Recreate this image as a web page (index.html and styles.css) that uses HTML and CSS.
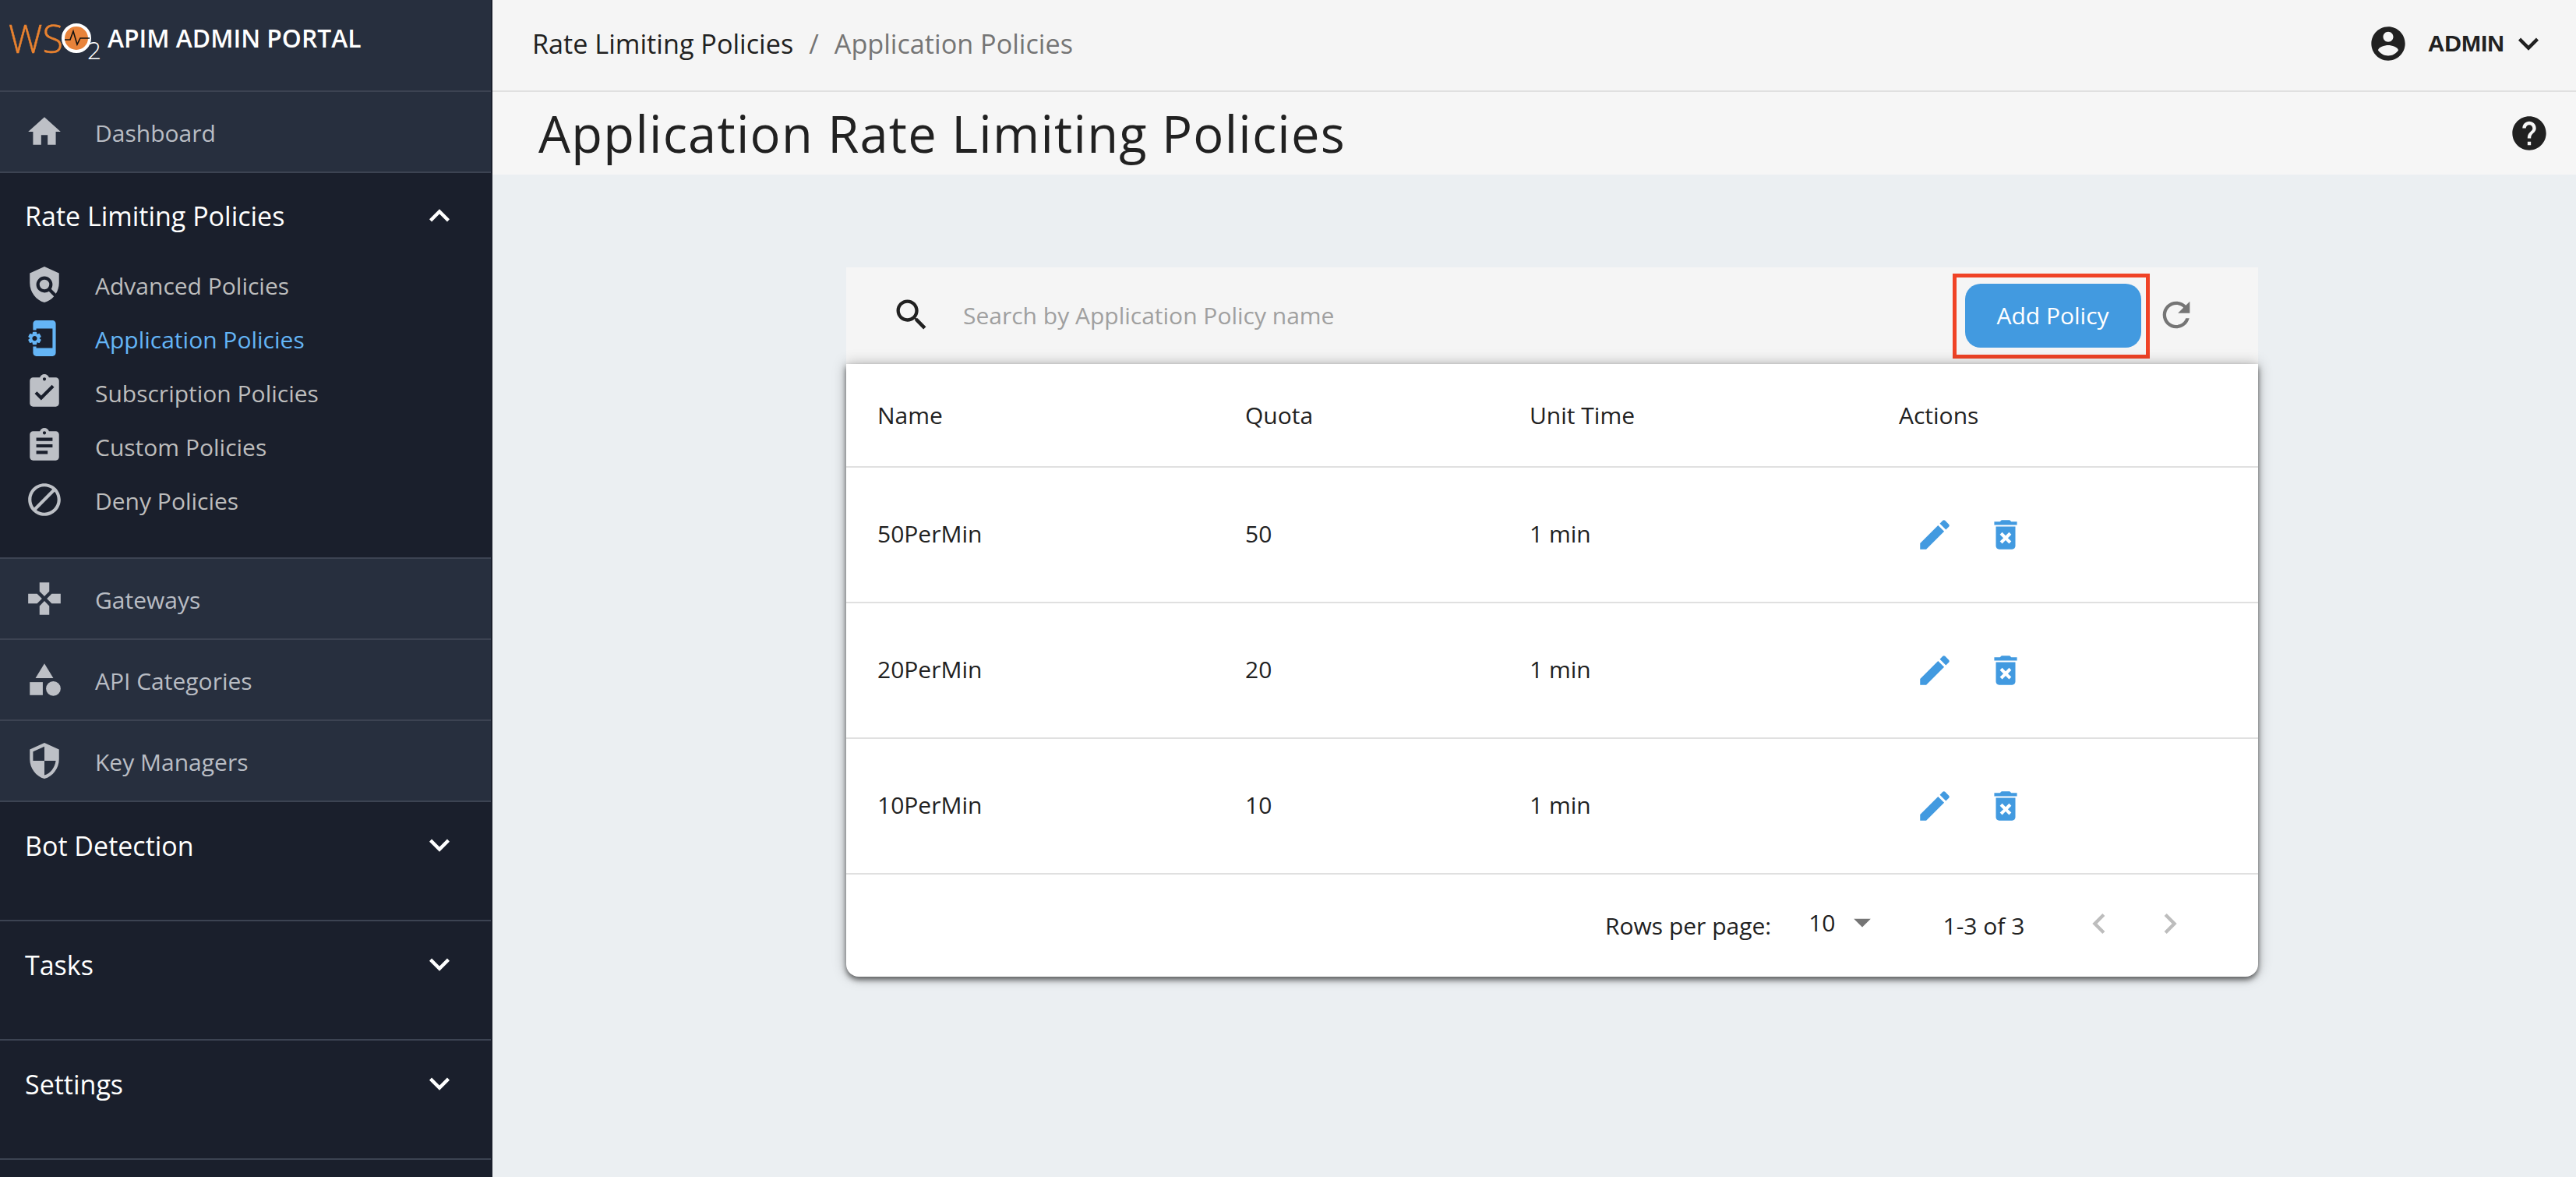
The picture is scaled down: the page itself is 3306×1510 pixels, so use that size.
FILE: index.html
```html
<!DOCTYPE html>
<html lang="en">

<head>
    <meta charset="UTF-8">
    <meta name="viewport" content="width=device-width, initial-scale=1.0">
    <title>Application Rate Limiting Policies</title>
    <link rel="stylesheet" href="styles.css">
</head>
<body>
    <div class="app">
        <aside class="sidebar">
            <div class="brand">
                <svg class="logo" width="132" height="96" viewBox="0 0 132 96">
                    <text class="logo-ws" x="11" y="68" textLength="70" lengthAdjust="spacingAndGlyphs">WS</text>
                    <circle cx="98" cy="49" r="17" fill="#e8833a" stroke="#fff" stroke-width="4"/>
                    <path d="M83 51h7l4-11 5 17 4-8h12" fill="none" stroke="#111" stroke-width="1.6"/>
                    <text class="logo-two" x="112" y="76" textLength="18" lengthAdjust="spacingAndGlyphs">2</text>
                </svg>
                <span class="brand-name">APIM ADMIN PORTAL</span>
            </div>

            <a class="nav-row">
                <svg class="nav-icon" viewBox="0 0 24 24"><path d="M10 20v-6h4v6h5v-8h3L12 3 2 12h3v8h5z"/></svg>
                <span>Dashboard</span>
            </a>

            <div class="nav-group open">
                <div class="group-title">
                    <span>Rate Limiting Policies</span>
                    <svg class="chevron" viewBox="0 0 24 24"><path d="M12 8l-6 6 1.41 1.41L12 10.83l4.59 4.58L18 14z"/></svg>
                </div>
                <a class="sub-row">
                    <svg class="nav-icon" viewBox="0 0 24 24"><path d="M21 5l-9-4-9 4v6c0 5.55 3.84 10.74 9 12 2.3-.56 4.33-1.9 5.88-3.71l-3.12-3.12c-1.94 1.29-4.58 1.07-6.29-.64-1.95-1.95-1.95-5.12 0-7.07 1.95-1.95 5.12-1.95 7.07 0 1.71 1.71 1.92 4.35.64 6.29l2.9 2.9C20.29 15.69 21 13.38 21 11V5z"/><circle cx="12" cy="12" r="3"/></svg>
                    <span>Advanced Policies</span>
                </a>
                <a class="sub-row active">
                    <svg class="nav-icon flip" viewBox="0 0 24 24"><path d="M21.81 12.74l-.82-.63v-.22l.8-.63c.16-.12.2-.34.1-.51l-.85-1.48c-.07-.13-.21-.2-.35-.2-.05 0-.1.01-.15.03l-.95.38c-.08-.05-.11-.07-.19-.11l-.15-1.01c-.03-.21-.2-.36-.4-.36h-1.71c-.2 0-.37.15-.4.34l-.14 1.01c-.03.02-.07.03-.1.05l-.09.06-.95-.38c-.05-.02-.1-.03-.15-.03-.14 0-.27.07-.35.2l-.85 1.48c-.1.17-.06.39.1.51l.8.63v.23l-.8.63c-.16.12-.2.34-.1.51l.85 1.48c.07.13.21.2.35.2.05 0 .1-.01.15-.03l.95-.37c.08.05.12.07.2.11l.15 1.01c.03.2.2.34.4.34h1.71c.2 0 .37-.15.4-.34l.15-1.01c.03-.02.07-.03.1-.05l.09-.06.95.38c.05.02.1.03.15.03.14 0 .27-.07.35-.2l.85-1.48c.1-.17.06-.39-.1-.51zM18 13.5c-.83 0-1.5-.67-1.5-1.5s.67-1.5 1.5-1.5 1.5.67 1.5 1.5-.67 1.5-1.5 1.5zM17 18H7V6h10v1h2V3c0-1.1-.9-2-2-2H7c-1.1 0-2 .9-2 2v18c0 1.1.9 2 2 2h10c1.1 0 2-.9 2-2v-4h-2v1z"/></svg>
                    <span>Application Policies</span>
                </a>
                <a class="sub-row">
                    <svg class="nav-icon" viewBox="0 0 24 24"><path d="M19 3h-4.18C14.4 1.84 13.3 1 12 1c-1.3 0-2.4.84-2.82 2H5c-1.1 0-2 .9-2 2v14c0 1.1.9 2 2 2h14c1.1 0 2-.9 2-2V5c0-1.1-.9-2-2-2zm-7 0c.55 0 1 .45 1 1s-.45 1-1 1-1-.45-1-1 .45-1 1-1zm-2 14l-4-4 1.41-1.41L10 14.17l6.59-6.59L18 9l-8 8z"/></svg>
                    <span>Subscription Policies</span>
                </a>
                <a class="sub-row">
                    <svg class="nav-icon" viewBox="0 0 24 24"><path d="M19 3h-4.18C14.4 1.84 13.3 1 12 1c-1.3 0-2.4.84-2.82 2H5c-1.1 0-2 .9-2 2v14c0 1.1.9 2 2 2h14c1.1 0 2-.9 2-2V5c0-1.1-.9-2-2-2zm-7 0c.55 0 1 .45 1 1s-.45 1-1 1-1-.45-1-1 .45-1 1-1zm2 14H7v-2h7v2zm3-4H7v-2h10v2zm0-4H7V7h10v2z"/></svg>
                    <span>Custom Policies</span>
                </a>
                <a class="sub-row">
                    <svg class="nav-icon" viewBox="0 0 24 24"><path d="M12 2C6.48 2 2 6.48 2 12s4.48 10 10 10 10-4.48 10-10S17.52 2 12 2zM4 12c0-4.42 3.58-8 8-8 1.85 0 3.55.63 4.9 1.69L5.69 16.9C4.63 15.55 4 13.85 4 12zm8 8c-1.85 0-3.55-.63-4.9-1.69L18.31 7.1C19.37 8.45 20 10.15 20 12c0 4.42-3.58 8-8 8z"/></svg>
                    <span>Deny Policies</span>
                </a>
            </div>

            <a class="nav-row">
                <svg class="nav-icon" viewBox="0 0 24 24"><path d="M15 7.5V2H9v5.5l3 3 3-3zM7.5 9H2v6h5.5l3-3-3-3zM9 16.5V22h6v-5.5l-3-3-3 3zM16.5 9l-3 3 3 3H22V9h-5.5z"/></svg>
                <span>Gateways</span>
            </a>
            <a class="nav-row">
                <svg class="nav-icon" viewBox="0 0 24 24"><path d="M12 2l-5.5 9h11z"/><circle cx="17.5" cy="17.5" r="4.5"/><path d="M3 13.5h8v8H3z"/></svg>
                <span>API Categories</span>
            </a>
            <a class="nav-row">
                <svg class="nav-icon" viewBox="0 0 24 24"><path d="M12 1L3 5v6c0 5.55 3.84 10.74 9 12 5.16-1.26 9-6.45 9-12V5l-9-4zm0 10.99h7c-.53 4.12-3.28 7.79-7 8.94V12H5V6.3l7-3.11v8.8z"/></svg>
                <span>Key Managers</span>
            </a>

            <div class="nav-group">
                <div class="group-title">
                    <span>Bot Detection</span>
                    <svg class="chevron" viewBox="0 0 24 24"><path d="M16.59 8.59L12 13.17 7.41 8.59 6 10l6 6 6-6z"/></svg>
                </div>
            </div>
            <div class="nav-group">
                <div class="group-title">
                    <span>Tasks</span>
                    <svg class="chevron" viewBox="0 0 24 24"><path d="M16.59 8.59L12 13.17 7.41 8.59 6 10l6 6 6-6z"/></svg>
                </div>
            </div>
            <div class="nav-group">
                <div class="group-title">
                    <span>Settings</span>
                    <svg class="chevron" viewBox="0 0 24 24"><path d="M16.59 8.59L12 13.17 7.41 8.59 6 10l6 6 6-6z"/></svg>
                </div>
            </div>
        </aside>

        <main class="main">
            <header class="topbar">
                <div class="crumbs">
                    <span class="crumb-link">Rate Limiting Policies</span>
                    <span class="crumb-sep">/</span>
                    <span class="crumb-current">Application Policies</span>
                </div>
                <div class="user">
                    <svg class="user-icon" viewBox="0 0 24 24"><path d="M12 2C6.48 2 2 6.48 2 12s4.48 10 10 10 10-4.48 10-10S17.52 2 12 2zm0 3c1.66 0 3 1.34 3 3s-1.34 3-3 3-3-1.34-3-3 1.34-3 3-3zm0 14.2c-2.5 0-4.71-1.28-6-3.22.03-1.99 4-3.08 6-3.08 1.99 0 5.97 1.09 6 3.08-1.29 1.94-3.5 3.22-6 3.22z"/></svg>
                    <span class="user-name">ADMIN</span>
                    <svg class="user-chevron" viewBox="0 0 24 24"><path d="M16.59 8.59L12 13.17 7.41 8.59 6 10l6 6 6-6z"/></svg>
                </div>
            </header>

            <div class="titlebar">
                <h1>Application Rate Limiting Policies</h1>
                <svg class="help-icon" viewBox="0 0 24 24"><path d="M12 2C6.48 2 2 6.48 2 12s4.48 10 10 10 10-4.48 10-10S17.52 2 12 2zm1 17h-2v-2h2v2zm2.07-7.75l-.9.92C13.45 12.9 13 13.5 13 15h-2v-.5c0-1.1.45-2.1 1.17-2.83l1.24-1.26c.37-.36.59-.86.59-1.41 0-1.1-.9-2-2-2s-2 .9-2 2H8c0-2.21 1.79-4 4-4s4 1.79 4 4c0 .88-.36 1.68-.93 2.25z"/></svg>
            </div>

            <section class="content">
                <div class="panel">
                    <div class="toolbar">
                        <svg class="search-icon" viewBox="0 0 24 24"><path d="M15.5 14h-.79l-.28-.27C15.41 12.59 16 11.11 16 9.5 16 5.91 13.09 3 9.5 3S3 5.91 3 9.5 5.91 16 9.5 16c1.61 0 3.09-.59 4.23-1.57l.27.28v.79l5 4.99L20.49 19l-4.99-5zm-6 0C7.01 14 5 11.99 5 9.5S7.01 5 9.5 5 14 7.01 14 9.5 11.99 14 9.5 14z"/></svg>
                        <div class="search-hint">Search by Application Policy name</div>
                        <div class="highlight">
                            <button class="add-btn">Add Policy</button>
                        </div>
                        <svg class="refresh-icon" viewBox="0 0 24 24"><path d="M17.65 6.35C16.2 4.9 14.21 4 12 4c-4.42 0-7.99 3.58-7.99 8s3.57 8 7.99 8c3.73 0 6.84-2.55 7.73-6h-2.08c-.82 2.33-3.04 4-5.65 4-3.31 0-6-2.69-6-6s2.69-6 6-6c1.66 0 3.14.69 4.22 1.78L13 11h7V4l-2.35 2.35z"/></svg>
                    </div>

                    <div class="card">
                        <table>
                            <colgroup>
                                <col class="col-name">
                                <col class="col-quota">
                                <col class="col-unit">
                                <col class="col-actions">
                            </colgroup>
                            <thead>
                                <tr>
                                    <th>Name</th>
                                    <th>Quota</th>
                                    <th>Unit Time</th>
                                    <th>Actions</th>
                                </tr>
                            </thead>
                            <tbody id="policyRows">
                            </tbody>
                        </table>
                        <div class="pager">
                            <span class="rows-label">Rows per page:</span>
                            <span class="rows-value">10</span>
                            <svg class="rows-arrow" viewBox="0 0 24 24"><path d="M7 10l5 5 5-5z"/></svg>
                            <span class="page-range">1-3 of 3</span>
                            <svg class="page-btn" viewBox="0 0 24 24"><path d="M15.41 7.41L14 6l-6 6 6 6 1.41-1.41L10.83 12z"/></svg>
                            <svg class="page-btn next" viewBox="0 0 24 24"><path d="M10 6L8.59 7.41 13.17 12l-4.58 4.59L10 18l6-6z"/></svg>
                        </div>
                    </div>
                </div>
            </section>
        </main>
    </div>
    <script>
        const policies = [
            { name: "50PerMin", quota: 50, unit: "1 min" },
            { name: "20PerMin", quota: 20, unit: "1 min" },
            { name: "10PerMin", quota: 10, unit: "1 min" }
        ];
        const editPath = "M3 17.25V21h3.75L17.81 9.94l-3.75-3.75L3 17.25zM20.71 7.04c.39-.39.39-1.02 0-1.41l-2.34-2.34c-.39-.39-1.02-.39-1.41 0l-1.83 1.83 3.75 3.75 1.83-1.83z";
        const deletePath = "M6 19c0 1.1.9 2 2 2h8c1.1 0 2-.9 2-2V7H6v12zm2.46-7.12l1.41-1.41L12 12.59l2.12-2.12 1.41 1.41L13.41 14l2.12 2.12-1.41 1.41L12 15.41l-2.12 2.12-1.41-1.41L10.59 14l-2.13-2.12zM15.5 4l-1-1h-5l-1 1H5v2h14V4z";
        const tableBody = document.getElementById("policyRows");
        policies.forEach((policy) => {
            const row = document.createElement("tr");
            row.innerHTML = `
                <td>${policy.name}</td>
                <td>${policy.quota}</td>
                <td>${policy.unit}</td>
                <td>
                    <div class="actions">
                        <svg class="action-icon" viewBox="0 0 24 24"><path d="${editPath}"/></svg>
                        <svg class="action-icon" viewBox="0 0 24 24"><path d="${deletePath}"/></svg>
                    </div>
                </td>
            `;
            tableBody.appendChild(row);
        });
    </script>
</body>

</html>
```

FILE: styles.css
```css
html, body {
    margin: 0;
    padding: 0;
}
body {
    font-family: "Open Sans", Arial, sans-serif;
    color: #212121;
    background-color: #ebeff2;
}
.app {
    display: flex;
    width: 3306px;
    height: 1510px;
    overflow: hidden;
}

/* sidebar */
.sidebar {
    width: 632px;
    flex: none;
    background-color: #1a1f2c;
}
.brand {
    width: 630px;
    height: 116px;
    display: flex;
    align-items: flex-start;
    background-color: #272f3e;
    border-bottom: 2px solid #3c4352;
}
.logo {
    flex: none;
    margin-right: 6px;
}
.logo-ws {
    font-family: "Open Sans", sans-serif;
    font-weight: 300;
    font-size: 50px;
    fill: #e9822f;
    stroke: #e9822f;
    stroke-width: 0.5px;
}
.logo-two {
    font-family: "Open Sans", sans-serif;
    font-weight: 300;
    font-size: 32px;
    fill: #fff;
}
.brand-name {
    color: #fff;
    font-size: 31.8px;
    font-weight: 600;
    line-height: 42px;
    margin-top: 28px;
}
.nav-row {
    width: 598px;
    height: 102px;
    display: flex;
    align-items: center;
    padding-left: 32px;
    background-color: #272f3e;
    border-bottom: 2px solid #3c4352;
    color: #b9bdc4;
    font-size: 30px;
}
.nav-row span {
    padding-top: 3px;
}
.nav-icon {
    width: 50px;
    height: 50px;
    flex: none;
    margin-right: 40px;
    fill: #bdc0c6;
}
.nav-icon.flip {
    transform: scaleX(-1);
}
.nav-group {
    width: 630px;
    height: 151px;
    border-bottom: 2px solid #3c4352;
}
.nav-group.open {
    height: 493px;
}
.group-title {
    height: 110px;
    display: flex;
    align-items: center;
    justify-content: space-between;
    padding: 0 40px 0 32px;
    color: #fff;
    font-size: 34px;
}
.nav-group:not(.open) .group-title span {
    padding-top: 2px;
}
.chevron {
    width: 52px;
    height: 52px;
    fill: #fff;
}
.sub-row {
    height: 69px;
    display: flex;
    align-items: center;
    padding-left: 32px;
    color: #bdbdbd;
    font-size: 30px;
}
.sub-row .nav-icon {
    margin-top: -3px;
}
.sub-row.active {
    color: #64b5f6;
}
.sub-row.active .nav-icon {
    fill: #64b5f6;
}

/* top of the page */
.main {
    flex: 1;
    display: flex;
    flex-direction: column;
}
.topbar {
    height: 112px;
    display: flex;
    align-items: center;
    justify-content: space-between;
    padding: 0 25px 4px 51px;
    background-color: #f5f5f5;
    border-bottom: 2px solid #e0e0e0;
}
.crumbs {
    font-size: 34.2px;
    display: flex;
    gap: 20px;
    margin-bottom: 2px;
}
.crumb-current {
    color: #757575;
}
.crumb-sep {
    color: #757575;
}
.user {
    display: flex;
    align-items: center;
}
.user-icon {
    width: 52px;
    height: 52px;
    fill: #212121;
    margin-right: 25px;
}
.user-name {
    font-family: "Liberation Sans", Arial, sans-serif;
    font-weight: 700;
    font-size: 30px;
}
.user-chevron {
    width: 52px;
    height: 52px;
    fill: #212121;
    margin-left: 5px;
    margin-right: 10px;
}
.titlebar {
    height: 106px;
    display: flex;
    align-items: center;
    justify-content: space-between;
    padding: 0 34px 0 59px;
    background-color: #f6f6f6;
}
h1 {
    margin: 0;
    font-size: 65px;
    font-weight: 400;
    letter-spacing: 1.25px;
}
.help-icon {
    width: 52px;
    height: 52px;
    fill: #212121;
}

/* policy table */
.content {
    flex: 1;
    padding: 119px 408px 0 454px;
}
.toolbar {
    height: 124px;
    display: flex;
    align-items: center;
    background-color: #f5f5f5;
    padding-left: 58px;
}
.search-icon {
    width: 52px;
    height: 52px;
    fill: #212121;
    flex: none;
    margin: -3px 40px 0 0;
}
.search-hint {
    flex: 1;
    font-size: 30px;
    color: #a0a0a0;
    margin-top: -2px;
}
.highlight {
    width: 253px;
    height: 109px;
    box-sizing: border-box;
    border: 5px solid #f04326;
    display: flex;
    align-items: center;
    justify-content: center;
    flex: none;
}
.add-btn {
    width: 226px;
    height: 82px;
    border: none;
    border-radius: 20px;
    background-color: #429ae0;
    color: #fff;
    font-family: "Open Sans", Arial, sans-serif;
    font-size: 30px;
    padding: 0 0 2px;
    margin-left: 4px;
}
.refresh-icon {
    width: 52px;
    height: 52px;
    fill: #757575;
    flex: none;
    margin: -3px 79px 0 8px;
}
.card {
    position: relative;
    background-color: #fff;
    border-radius: 0 0 16px 16px;
    box-shadow: 0 4px 7px rgba(0, 0, 0, 0.55), 0 0 18px rgba(0, 0, 0, 0.28);
}
table {
    width: 100%;
    border-collapse: collapse;
    table-layout: fixed;
}
.col-name {
    width: 472px;
}
.col-quota {
    width: 365px;
}
.col-unit {
    width: 474px;
}
th, td {
    padding: 0 0 0 40px;
    text-align: left;
    font-size: 30px;
    font-weight: 400;
    border-bottom: 2px solid #e0e0e0;
}
th {
    height: 131px;
}
td {
    height: 169px;
    padding-bottom: 3px;
}
.actions {
    display: flex;
    align-items: center;
    gap: 41px;
    padding-left: 21px;
    margin-top: 3px;
}
.action-icon {
    width: 50px;
    height: 50px;
    fill: #429ae0;
}
.pager {
    height: 131px;
    display: flex;
    align-items: center;
    padding-left: 974px;
    font-size: 30px;
}
.rows-value {
    margin-left: 48px;
    margin-bottom: 8px;
}
.rows-arrow {
    width: 52px;
    height: 52px;
    fill: #757575;
    margin-left: 8px;
    margin-bottom: 10px;
}
.page-range {
    margin-left: 78px;
}
.page-btn {
    width: 52px;
    height: 52px;
    fill: #bdbdbd;
    margin-left: 70px;
    margin-bottom: 6px;
}
.page-btn.next {
    margin-left: 39px;
}
```
